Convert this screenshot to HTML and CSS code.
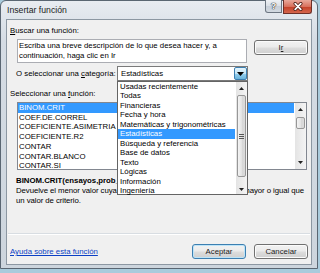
FILE: index.html
```html
<!DOCTYPE html>
<html lang="es">

<head>
    <meta charset="UTF-8">
    <meta name="viewport" content="width=device-width, initial-scale=1.0">
    <title>Insertar función</title>
    <link rel="stylesheet" href="styles.css">
</head>

<body>
    <div class="window">
        <div class="titlebar">
            <span class="title">Insertar función</span>
            <div class="caption">
                <span class="cap-btn help">?</span>
                <span class="cap-btn close">
                    <svg width="12" height="9" viewBox="0 0 12 9">
                        <path d="M3.2 1.6 L8.8 7.4 M8.8 1.6 L3.2 7.4" stroke="#4a1a12" stroke-width="3.4" stroke-linecap="round" fill="none"/>
                        <path d="M3.2 1.6 L8.8 7.4 M8.8 1.6 L3.2 7.4" stroke="#fff" stroke-width="1.8" stroke-linecap="round" fill="none"/>
                    </svg>
                </span>
            </div>
        </div>

        <div class="client">
            <div class="label"><u>B</u>uscar una función:</div>
            <div class="search-row">
                <div class="search-box">Escriba una breve descripción de lo que desea hacer y, a continuación, haga clic en Ir</div>
                <button class="btn go">I<u>r</u></button>
            </div>

            <div class="cat-row">
                <span class="cat-label">O seleccionar una <u>c</u>ategoría:</span>
                <div class="select">
                    <span>Estadísticas</span>
                    <span class="select-arrow">
                        <svg width="7" height="4" viewBox="0 0 7 4"><path d="M0 0 H7 L3.5 4 Z" fill="#000"/></svg>
                    </span>
                </div>
            </div>

            <div class="label label-func">Seleccionar una <u>f</u>unción:</div>
            <div class="func-list">
                <ul class="items">
                    <li class="selected">BINOM.CRIT</li>
                    <li>COEF.DE.CORREL</li>
                    <li>COEFICIENTE.ASIMETRIA</li>
                    <li>COEFICIENTE.R2</li>
                    <li>CONTAR</li>
                    <li>CONTAR.BLANCO</li>
                    <li>CONTAR.SI</li>
                </ul>
                <div class="scrollbar">
                    <div class="sb-btn">
                        <svg width="5" height="3" viewBox="0 0 5 3"><path d="M0 3 H5 L2.5 0 Z" fill="#222"/></svg>
                    </div>
                    <div class="sb-thumb small"></div>
                    <div class="sb-track"></div>
                    <div class="sb-btn">
                        <svg width="5" height="3" viewBox="0 0 5 3"><path d="M0 0 H5 L2.5 3 Z" fill="#222"/></svg>
                    </div>
                </div>
            </div>

            <div class="signature">BINOM.CRIT(ensayos,prob_éxito,alfa)</div>
            <div class="desc">Devuelve el menor valor cuya distribución binomial acumulativa es mayor o igual que un valor de criterio.</div>

            <div class="sep"></div>
            <div class="footer">
                <a href="#" class="help-link">Ayuda sobre esta función</a>
                <button class="btn default">Aceptar</button>
                <button class="btn">Cancelar</button>
            </div>
        </div>

        <!-- lista desplegable abierta sobre el cuadro -->
        <div class="dropdown">
            <ul class="items">
                <li>Usadas recientemente</li>
                <li>Todas</li>
                <li>Financieras</li>
                <li>Fecha y hora</li>
                <li>Matemáticas y trigonométricas</li>
                <li class="selected">Estadísticas</li>
                <li>Búsqueda y referencia</li>
                <li>Base de datos</li>
                <li>Texto</li>
                <li>Lógicas</li>
                <li>Información</li>
                <li>Ingeniería</li>
            </ul>
            <div class="scrollbar">
                <div class="sb-btn">
                    <svg width="5" height="3" viewBox="0 0 5 3"><path d="M0 3 H5 L2.5 0 Z" fill="#222"/></svg>
                </div>
                <div class="sb-thumb big"><span class="grip"></span></div>
                <div class="sb-track"></div>
                <div class="sb-btn down">
                    <svg width="5" height="3" viewBox="0 0 5 3"><path d="M0 0 H5 L2.5 3 Z" fill="#222"/></svg>
                </div>
            </div>
        </div>
    </div>
</body>

</html>
```

FILE: styles.css
```css
body {
    margin: 0;
    background: #a9cbdc;
    font-family: "Liberation Sans", Arial, sans-serif;
    font-size: 7.8px;
    color: #000;
}

ul {
    margin: 0;
    padding: 0;
    list-style: none;
}

.window {
    position: relative;
    width: 318px;
    height: 269px;
    box-sizing: border-box;
    border: 1px solid #5a6672;
    border-radius: 6px 6px 0 0;
    padding: 0 5px 3px;
    background: linear-gradient(#e8ecf1, #d5dce4 40px, #cdd5dd);
    display: flex;
    flex-direction: column;
}

/* barra de titulo */
.titlebar {
    height: 18px;
    flex: none;
    display: flex;
    align-items: flex-start;
}

.title {
    font-size: 8.7px;
    line-height: 18px;
    padding-left: 1px;
    color: #1b1b1b;
}

.caption {
    margin-left: auto;
    margin-top: -1px;
    display: flex;
    gap: 1px;
}

.cap-btn {
    height: 14px;
    box-sizing: border-box;
    display: flex;
    align-items: center;
    justify-content: center;
    border: 1px solid #6b7581;
    border-top: none;
}

.help {
    width: 17px;
    height: 13px;
    border-radius: 0 0 0 3px;
    background: linear-gradient(#eef1f5, #d9dfe6 50%, #c6ced8 51%, #d2d9e1);
    color: #fff;
    font-weight: bold;
    font-size: 9px;
    text-shadow: 0 0 1px #333, 0 0 1px #333, 0 0 1px #333;
}

.close {
    width: 29px;
    border-color: #6e3028;
    border-radius: 0 0 3px 0;
    background: linear-gradient(#e9a99b, #d9715d 50%, #c43f26 51%, #d4654c);
}

/* area cliente */
.client {
    height: 246px;
    flex: none;
    box-sizing: border-box;
    border: 1px solid #8c97a2;
    background: #f0f0f0;
    padding: 6px 3px 5px 3px;
    display: flex;
    flex-direction: column;
}

.label {
    line-height: 10px;
}

.label-func {
    margin-top: 8px;
}

.search-row {
    display: flex;
    align-items: flex-start;
    margin: 3px 0 0 7px;
}

.search-box {
    width: 230px;
    height: 24px;
    box-sizing: border-box;
    border: 1px solid #abadb3;
    background: #fff;
    padding: 1px 1px;
    line-height: 10px;
}

.btn {
    height: 15px;
    box-sizing: border-box;
    padding: 0;
    border: 1px solid #707070;
    border-radius: 3px;
    background: linear-gradient(#f2f2f2, #ebebeb 48%, #dddddd 52%, #cfcfcf);
    box-shadow: inset 0 0 0 1px #fbfbfb;
    font-family: inherit;
    font-size: 7.8px;
    color: #222;
}

.go {
    width: 54px;
    margin: 1px 0 0 7px;
}

.cat-row {
    display: flex;
    align-items: center;
    height: 15px;
    margin: 3px 0 0 6px;
}

.cat-label {
    width: 101px;
    flex: none;
}

.select {
    width: 131px;
    height: 15px;
    box-sizing: border-box;
    border: 1px solid #7a7a7a;
    background: #fff;
    display: flex;
    align-items: center;
    padding-left: 3px;
}

.select-arrow {
    margin-left: auto;
    width: 13px;
    height: 13px;
    box-sizing: border-box;
    border: 1px solid #3c7fb1;
    border-radius: 2px;
    background: linear-gradient(#e5f4fc, #c4e5f6 50%, #98d1ef 51%, #68b3db);
    display: flex;
    align-items: center;
    justify-content: center;
}

/* lista de funciones */
.func-list {
    width: 290px;
    height: 68px;
    box-sizing: border-box;
    margin: 3px 0 0 7px;
    border: 1px solid #828790;
    background: #fff;
    display: flex;
}

.items {
    flex: 1;
}

.items li {
    padding-left: 1px;
    white-space: nowrap;
}

.func-list .items li {
    line-height: 9.7px;
}

.items li.selected {
    background: #3399ff;
    color: #fff;
}

.scrollbar {
    width: 11px;
    flex: none;
    margin-left: 1px;
    display: flex;
    flex-direction: column;
    background: linear-gradient(90deg, #e4e4e4, #f4f4f4);
}

.sb-btn {
    height: 13px;
    display: flex;
    align-items: center;
    justify-content: center;
}

.sb-thumb {
    margin: 1px 1px 0;
    box-sizing: border-box;
    border: 1px solid #979797;
    border-radius: 2px;
    background: linear-gradient(90deg, #f4f4f4, #e4e4e4 50%, #d6d6d6 51%, #dcdcdc);
    display: flex;
    align-items: center;
    justify-content: center;
}

.sb-thumb.small {
    height: 12px;
}

.sb-thumb.big {
    height: 82px;
}

.grip {
    width: 5px;
    height: 5px;
    background: repeating-linear-gradient(#555 0 1px, transparent 1px 2px);
}

.sb-track {
    flex: 1;
}

.signature {
    margin: 6px 0 0 6px;
    line-height: 10px;
    font-weight: bold;
    white-space: nowrap;
}

.desc {
    margin: 0 -4px 0 6px;
    line-height: 9.5px;
    letter-spacing: -0.07px;
}

.sep {
    margin: auto -2px 9px -2px;
    height: 1px;
    background: #d8dde2;
    border-bottom: 1px solid #fff;
}

.footer {
    display: flex;
    align-items: center;
    height: 15px;
}

.help-link {
    color: #0b3fc4;
    text-decoration: underline;
}

.footer .btn {
    width: 54px;
}

.footer .default {
    margin-left: auto;
    margin-right: 8px;
    border-color: #3c7fb1;
    box-shadow: inset 0 0 0 1px #bde4f8;
}

/* desplegable abierto */
.dropdown {
    position: absolute;
    left: 116px;
    top: 80px;
    width: 131px;
    height: 114px;
    box-sizing: border-box;
    border: 1px solid #646464;
    background: #fff;
    display: flex;
}

.dropdown .items li {
    line-height: 9.45px;
    padding-left: 2px;
}

.dropdown .sb-btn {
    height: 12px;
}

.dropdown .sb-btn.down {
    height: 10px;
}
```
